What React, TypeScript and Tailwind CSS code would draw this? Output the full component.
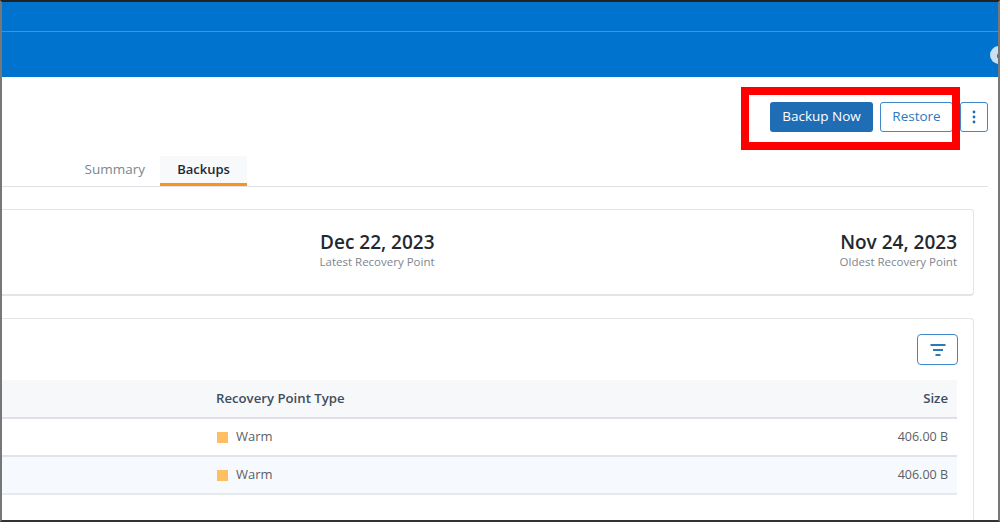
import React from 'react'

const font = { fontFamily: '"Open Sans", sans-serif' }

const rows = [
  { type: 'Warm', size: '406.00 B', alt: false },
  { type: 'Warm', size: '406.00 B', alt: true },
]

const App = () => {
  return (
    <div
      className="relative w-[1000px] h-[522px] overflow-hidden bg-white border-t-2 border-l-2 border-r-2 border-b-2 border-t-[#222] border-l-[#777] border-r-[#777] border-b-[#333]"
      style={font}
    >
      {/* blue header */}
      <div className="h-[29px] bg-[#0073cf] border-b border-[#3d93dc] box-content" />
      <div className="relative h-[45px] bg-[#0073cf]">
        <div className="absolute right-[-10px] top-[14px] w-[18px] h-[18px] rounded-full bg-[#c9dff2]">
          <div className="absolute left-[7px] top-[7px] w-[6px] h-[6px] rounded-full bg-[#0073cf]" />
        </div>
      </div>

      {/* actions */}
      <div className="flex justify-end items-center h-[30px] mt-[25px] pr-[10px]">
        <button className="w-[103px] h-[30px] pb-[2px] rounded-[3px] bg-[#1f6db5] text-white text-[13.5px] font-medium">
          Backup Now
        </button>
        <button className="w-[73px] h-[30px] pb-[2px] ml-[7px] rounded-[3px] bg-white border border-[#3f88c9] text-[#2f78bb] text-[13.5px]">
          Restore
        </button>
        <button className="w-[28px] h-[30px] ml-[7px] rounded-[3px] bg-white border border-[#3f88c9] flex items-center justify-center">
          <svg width="4" height="14" viewBox="0 0 4 14" fill="#1f6db5">
            <circle cx="2" cy="2" r="1.4" />
            <circle cx="2" cy="7" r="1.4" />
            <circle cx="2" cy="12" r="1.4" />
          </svg>
        </button>
      </div>

      {/* tabs */}
      <div className="flex h-[30px] mt-[24px] mr-[10px] border-b border-[#dfe1e6] box-content">
        <div className="w-[158px] flex justify-end items-center pr-[15px] pb-[4px] text-[13.5px] text-[#7d8691]">Summary</div>
        <div className="w-[87px] h-[30px] flex items-center justify-center bg-[#f8f9fb] border-b-[3px] border-[#f7941d] text-[13px] font-semibold text-[#1f2933]">
          Backups
        </div>
      </div>

      {/* recovery points */}
      <div className="flex justify-end items-start h-[87px] mt-[22px] mr-[24px] bg-white rounded-r-[4px] border-t border-r border-b-2 border-[#e3e4e6] pr-[16px] pt-[20px]">
        <div className="text-right mr-[405px]">
          <div className="text-[19px] leading-[25px] font-semibold text-[#1f2933]">Dec 22, 2023</div>
          <div className="text-[11.5px] leading-[14px] text-[#7d8691]">Latest Recovery Point</div>
        </div>
        <div className="text-right">
          <div className="text-[19px] leading-[25px] font-semibold text-[#1f2933]">Nov 24, 2023</div>
          <div className="text-[11.5px] leading-[14px] text-[#7d8691]">Oldest Recovery Point</div>
        </div>
      </div>

      {/* backups table */}
      <div className="h-[210px] mt-[22px] mr-[24px] bg-white rounded-tr-[4px] border-t border-r border-[#e3e4e6] pr-[16px] pt-[15px]">
        <div className="flex justify-end -mr-px">
          <button className="w-[41px] h-[31px] rounded-[4px] border border-[#3f88c9] flex items-center justify-center">
            <svg width="16" height="14" viewBox="0 0 16 14" stroke="#2f78bb" strokeWidth="2">
              <path d="M0.5 2h15M3 7h10M5.5 12h5" />
            </svg>
          </button>
        </div>
        <div className="mt-[15px] h-[39px] flex items-center bg-[#f7f8fa] border-b-2 border-[#dfe1e6] text-[13.2px] font-semibold text-[#3f4d5c]">
          <div className="w-[214px] shrink-0" />
          <div className="flex-1">Recovery Point Type</div>
          <div className="pr-[9px]">Size</div>
        </div>
        {rows.map((row, i) => (
          <div
            key={i}
            className={
              row.alt
                ? 'h-[38px] flex items-center bg-[#f6f9fd] border-b-2 border-[#e6e9ee] text-[13px] text-[#5b5f66]'
                : 'h-[38px] flex items-center bg-white border-b-2 border-[#dfe4ea] text-[13px] text-[#5b5f66]'
            }
          >
            <div className="w-[215px] shrink-0" />
            <div className="w-[11px] h-[11px] bg-[#fdbf61] mr-[8px]" />
            <div className="flex-1">{row.type}</div>
            <div className="pr-[9px] text-[12.5px]">{row.size}</div>
          </div>
        ))}
      </div>

      {/* red annotation */}
      <div className="absolute left-[739px] top-[85px] w-[219px] h-[63px] border-[8px] border-[#ff0000]" />
    </div>
  )
}

export default App
